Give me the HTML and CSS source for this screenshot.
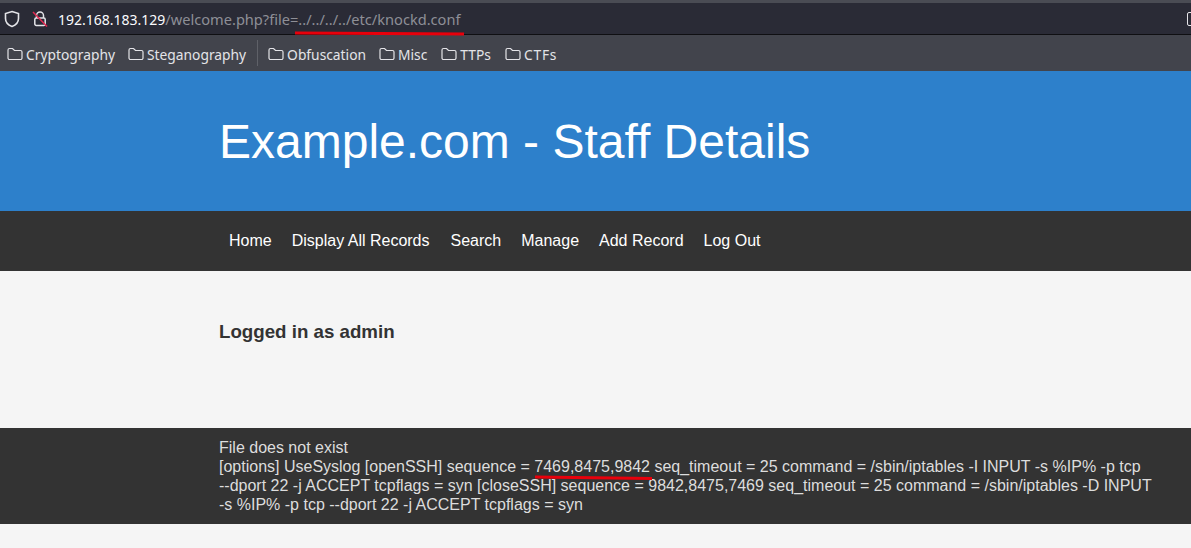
FILE: index.html
```html
<!DOCTYPE html>
<html lang="en">
<head>
<meta charset="utf-8">
<title>Example.com - Staff Details</title>
<link rel="stylesheet" href="styles.css">
</head>
<body>
<div class="browser">
  <div class="urlbar">
    <svg class="shield" width="16" height="18" viewBox="0 0 16 18"><path d="M8 1.500 L14.500 3.600 V8.500 C14.500 12.500 11.500 15.200 8 16.500 C4.500 15.200 1.500 12.500 1.500 8.500 V3.600 Z" fill="none" stroke="#e4e4e8" stroke-width="1.600"/></svg>
    <svg class="lock" width="16" height="18" viewBox="0 0 16 18"><path d="M4.500 8 V5.500 A3.500 3.500 0 0 1 11.500 5.500 V8" fill="none" stroke="#e4e4e8" stroke-width="1.500"/><rect x="2.800" y="8" width="10.400" height="7.500" rx="1.500" fill="none" stroke="#e4e4e8" stroke-width="1.500"/><path d="M1 2 L15 16.500" stroke="#e22850" stroke-width="1.500"/></svg>
    <span class="url"><span class="host">192.168.183.129</span><span class="path">/welcome.php?file=../../../../etc/knockd.conf</span></span>
    <span class="corner-icon"></span>
  </div>
  <div class="bookmarks">
    <a class="bm"><svg class="folder" viewBox="0 0 16 14"><path d="M1 3 A1.500 1.500 0 0 1 2.500 1.500 H5.500 L7.500 3.500 H13.500 A1.500 1.500 0 0 1 15 5 V11 A1.500 1.500 0 0 1 13.500 12.500 H2.500 A1.500 1.500 0 0 1 1 11 Z" fill="none" stroke="#e4e4e8" stroke-width="1.200"/></svg>Cryptography</a>
    <a class="bm"><svg class="folder" viewBox="0 0 16 14"><path d="M1 3 A1.500 1.500 0 0 1 2.500 1.500 H5.500 L7.500 3.500 H13.500 A1.500 1.500 0 0 1 15 5 V11 A1.500 1.500 0 0 1 13.500 12.500 H2.500 A1.500 1.500 0 0 1 1 11 Z" fill="none" stroke="#e4e4e8" stroke-width="1.200"/></svg>Steganography</a>
    <span class="sep"></span>
    <a class="bm"><svg class="folder" viewBox="0 0 16 14"><path d="M1 3 A1.500 1.500 0 0 1 2.500 1.500 H5.500 L7.500 3.500 H13.500 A1.500 1.500 0 0 1 15 5 V11 A1.500 1.500 0 0 1 13.500 12.500 H2.500 A1.500 1.500 0 0 1 1 11 Z" fill="none" stroke="#e4e4e8" stroke-width="1.200"/></svg>Obfuscation</a>
    <a class="bm"><svg class="folder" viewBox="0 0 16 14"><path d="M1 3 A1.500 1.500 0 0 1 2.500 1.500 H5.500 L7.500 3.500 H13.500 A1.500 1.500 0 0 1 15 5 V11 A1.500 1.500 0 0 1 13.500 12.500 H2.500 A1.500 1.500 0 0 1 1 11 Z" fill="none" stroke="#e4e4e8" stroke-width="1.200"/></svg>Misc</a>
    <a class="bm bm-shift"><svg class="folder" viewBox="0 0 16 14"><path d="M1 3 A1.500 1.500 0 0 1 2.500 1.500 H5.500 L7.500 3.500 H13.500 A1.500 1.500 0 0 1 15 5 V11 A1.500 1.500 0 0 1 13.500 12.500 H2.500 A1.500 1.500 0 0 1 1 11 Z" fill="none" stroke="#e4e4e8" stroke-width="1.200"/></svg>TTPs</a>
    <a class="bm bm-shift"><svg class="folder" viewBox="0 0 16 14"><path d="M1 3 A1.500 1.500 0 0 1 2.500 1.500 H5.500 L7.500 3.500 H13.500 A1.500 1.500 0 0 1 15 5 V11 A1.500 1.500 0 0 1 13.500 12.500 H2.500 A1.500 1.500 0 0 1 1 11 Z" fill="none" stroke="#e4e4e8" stroke-width="1.200"/></svg><span class="ctfs">CTFs</span></a>
  </div>
  <svg class="mark mark-url" width="172" height="7" viewBox="0 0 172 7"><path d="M1 3 L170 4" stroke="#e8000b" stroke-width="3" fill="none"/></svg>
</div>
<header class="hero"><div class="wrap"><h1>Example.com - Staff Details</h1></div></header>
<nav class="menu"><div class="wrap menu-row">
  <a>Home</a><a class="wide">Display All Records</a><a>Search</a><a>Manage</a><a>Add Record</a><a>Log Out</a>
</div></nav>
<main class="content"><div class="wrap"><h3>Logged in as admin</h3></div></main>
<footer class="foot"><div class="wrap foot-text">
  File does not exist<br>
  [options] UseSyslog [openSSH] sequence = 7469,8475,9842 seq_timeout = 25 command = /sbin/iptables -I INPUT -s %IP% -p tcp<br>
  --dport 22 -j ACCEPT tcpflags = syn [closeSSH] sequence = 9842,8475,7469 seq_timeout = 25 command = /sbin/iptables -D INPUT<br>
  -s %IP% -p tcp --dport 22 -j ACCEPT tcpflags = syn
  <svg class="mark mark-seq" width="120" height="6" viewBox="0 0 120 6"><path d="M1 2 L118 3.500" stroke="#e8000b" stroke-width="3" fill="none"/></svg>
</div></footer>
</body>
</html>
```

FILE: styles.css
```css
* { box-sizing: border-box; }
html, body { margin: 0; padding: 0; }
body { background: #f5f5f5; font-family: "Liberation Sans", Arial, sans-serif; overflow: hidden; }
a { color: inherit; text-decoration: none; }

.browser { position: relative; height: 71px; background: #42444c; font-family: "Noto Sans", sans-serif; }
.urlbar { height: 35px; border-top: 3px solid #4a4c54; border-bottom: 1px solid #0f0f12; background: #2a2b36; display: flex; align-items: center; padding-left: 4px; position: relative; }
.shield { margin-right: 12px; flex: none; }
.lock { flex: none; margin-right: 10px; }
.url { white-space: nowrap; }
.host { color: #fbfbfe; font-size: 14px; }
.path { color: #8e8f96; font-size: 14.600px; }
.corner-icon { position: absolute; right: -8px; top: 9px; width: 12px; height: 14px; border: 1.500px solid #e4e4e8; border-radius: 2px; }
.bookmarks { height: 36px; display: flex; align-items: center; padding: 2px 0 0 7px; gap: 13px; font-size: 13.800px; color: #e4e4e8; }
.bm { display: flex; align-items: center; gap: 3px; white-space: nowrap; }
.bm-shift { margin-left: 1px; }
.folder { width: 16px; height: 14px; flex: none; }
.sep { width: 1px; height: 26px; background: #5f6168; margin: 0 -3px 2px -2px; }
.ctfs { letter-spacing: 0.800px; }
.mark { position: absolute; display: block; }
.mark-url { left: 294px; top: 30px; }

.wrap { padding: 0 15px; margin-left: 204px; width: 957px; }
.hero { height: 140px; background: #2d80cb; color: #fff; display: flex; align-items: center; padding-top: 2px; }
.hero h1 { margin: 0; font-size: 48px; font-weight: 400; line-height: 1.1; }
.menu { height: 60px; background: #333; color: #fff; display: flex; align-items: center; font-size: 16px; }
.menu-row { display: flex; gap: 20px; padding-left: 25px; }
.wide { margin-right: 1px; }
.content { height: 157px; padding-top: 50px; color: #333; }
.content h3 { margin: 0; font-size: 18.720px; font-weight: 700; line-height: 22px; }
.foot { height: 96px; background: #333; color: #ddd; font-size: 16px; line-height: 19px; padding-top: 10px; }
.foot-text { position: relative; width: 966px; }
.mark-seq { left: 330px; top: 37px; }
```
